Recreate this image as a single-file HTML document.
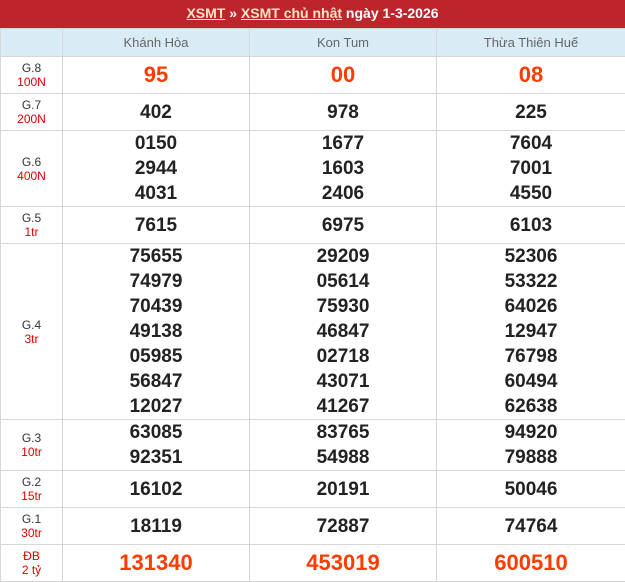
<!DOCTYPE html>
<html><head><meta charset="utf-8"><style>
*{margin:0;padding:0;box-sizing:border-box}
body{width:625px;height:575px;overflow:hidden;background:#fff;font-family:"Liberation Sans",Arial,sans-serif}
.hd{position:absolute;left:0;top:0;width:625px;height:28px;background:#be252b;color:#fff;font-weight:bold;font-size:14px;text-align:center;line-height:27px}
.hd a{color:#fde6c6;text-decoration:underline}
table{position:absolute;left:0;top:28px;border-collapse:collapse;width:625px;table-layout:fixed}
td{border:1px solid #d6d6d6;text-align:center;vertical-align:middle;padding:0}
tr.h td{background:#d9ecf5;color:#666;font-size:13px;height:28px}
.l{font-size:12px;color:#333;line-height:14px}
.l span{color:#e10000;display:block}
.n{font-size:19px;font-weight:bold;color:#222;line-height:25px}
.r{font-size:22px;font-weight:bold;color:#ff3c00}
</style></head><body>
<div class="hd"><a>XSMT</a> » <a>XSMT chủ nhật</a> ngày 1-3-2026</div>
<table>
<colgroup><col style="width:62px"><col style="width:187px"><col style="width:187px"><col style="width:189px"></colgroup>
<tr class="h"><td></td><td>Khánh Hòa</td><td>Kon Tum</td><td>Thừa Thiên Huế</td></tr>
<tr style="height:37px"><td class="l">G.8<span>100N</span></td><td class="r">95</td><td class="r">00</td><td class="r">08</td></tr>
<tr style="height:37px"><td class="l">G.7<span>200N</span></td><td class="n">402</td><td class="n">978</td><td class="n">225</td></tr>
<tr style="height:75px"><td class="l">G.6<span>400N</span></td><td class="n">0150<br>2944<br>4031</td><td class="n">1677<br>1603<br>2406</td><td class="n">7604<br>7001<br>4550</td></tr>
<tr style="height:37px"><td class="l">G.5<span>1tr</span></td><td class="n">7615</td><td class="n">6975</td><td class="n">6103</td></tr>
<tr style="height:176px"><td class="l">G.4<span>3tr</span></td><td class="n">75655<br>74979<br>70439<br>49138<br>05985<br>56847<br>12027</td><td class="n">29209<br>05614<br>75930<br>46847<br>02718<br>43071<br>41267</td><td class="n">52306<br>53322<br>64026<br>12947<br>76798<br>60494<br>62638</td></tr>
<tr style="height:50px"><td class="l">G.3<span>10tr</span></td><td class="n">63085<br>92351</td><td class="n">83765<br>54988</td><td class="n">94920<br>79888</td></tr>
<tr style="height:37px"><td class="l">G.2<span>15tr</span></td><td class="n">16102</td><td class="n">20191</td><td class="n">50046</td></tr>
<tr style="height:37px"><td class="l">G.1<span>30tr</span></td><td class="n">18119</td><td class="n">72887</td><td class="n">74764</td></tr>
<tr style="height:37px"><td class="l" style="color:#e10000">ĐB<span>2 tỷ</span></td><td class="r">131340</td><td class="r">453019</td><td class="r">600510</td></tr>
</table>
</body></html>
